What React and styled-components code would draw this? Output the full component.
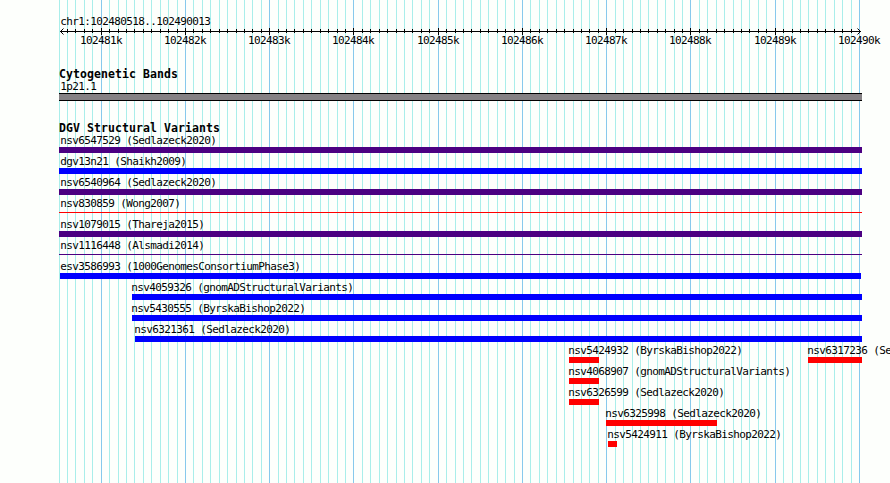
import React from "react";
import styled, { createGlobalStyle } from "styled-components";

const WIDTH = 890;
const HEIGHT = 483;
const TRACK_LEFT = 59;
const KB_START = 102481;

const ticks = [];
for (let n = -5; n <= 90; n++) {
  ticks.push({
    n,
    x: Math.floor(101.2 + n * 8.4255),
    major: n % 10 === 0,
  });
}

const rows = [
  [{ name: "nsv6547529 (Sedlazeck2020)", start: 59, end: 862, color: "#4b0082" }],
  [{ name: "dgv13n21 (Shaikh2009)", start: 59, end: 862, color: "#0000ff" }],
  [{ name: "nsv6540964 (Sedlazeck2020)", start: 59, end: 862, color: "#4b0082" }],
  [{ name: "nsv830859 (Wong2007)", start: 59, end: 862, color: "#ff0000", thin: true }],
  [{ name: "nsv1079015 (Thareja2015)", start: 59, end: 862, color: "#4b0082" }],
  [{ name: "nsv1116448 (Alsmadi2014)", start: 59, end: 862, color: "#4b0082", thin: true }],
  [{ name: "esv3586993 (1000GenomesConsortiumPhase3)", start: 60, end: 861, color: "#0000ff" }],
  [{ name: "nsv4059326 (gnomADStructuralVariants)", start: 132, end: 862, color: "#0000ff" }],
  [{ name: "nsv5430555 (ByrskaBishop2022)", start: 132, end: 862, color: "#0000ff" }],
  [{ name: "nsv6321361 (Sedlazeck2020)", start: 135, end: 862, color: "#0000ff" }],
  [
    { name: "nsv5424932 (ByrskaBishop2022)", start: 569, end: 599, color: "#ff0000" },
    { name: "nsv6317236 (Sedlazeck2020)", start: 808, end: 862, color: "#ff0000" },
  ],
  [{ name: "nsv4068907 (gnomADStructuralVariants)", start: 569, end: 599, color: "#ff0000" }],
  [{ name: "nsv6326599 (Sedlazeck2020)", start: 569, end: 599, color: "#ff0000" }],
  [{ name: "nsv6325998 (Sedlazeck2020)", start: 606, end: 717, color: "#ff0000" }],
  [{ name: "nsv5424911 (ByrskaBishop2022)", start: 608, end: 617, color: "#ff0000" }],
];

function GridLines() {
  return (
    <Backdrop width={WIDTH} height={HEIGHT} shapeRendering="crispEdges">
      {ticks.map((t) => (
        <rect
          key={t.n}
          x={t.x}
          y="0"
          width="1"
          height={HEIGHT}
          fill={t.major ? "#87c9ec" : "#a9eeea"}
        />
      ))}
    </Backdrop>
  );
}

function Ruler() {
  return (
    <Axis width={WIDTH} height="22">
      <g shapeRendering="crispEdges">
        <rect x="60" y="4" width="801" height="1" />
        {ticks.slice(1, -1).map((t) => (
          <rect
            key={t.n}
            x={t.x}
            y={t.major ? 1 : 2}
            width="1"
            height={t.major ? 7 : 4}
          />
        ))}
      </g>
      <path d="M63.5 1.5 L60.5 4.5 L63.5 7.5 M857.5 1.5 L860.5 4.5 L857.5 7.5" />
      {ticks
        .filter((t) => t.major)
        .map((t) => (
          <text key={t.n} x={t.x - 21} y="17">
            {KB_START + t.n / 10}k
          </text>
        ))}
    </Axis>
  );
}

function VariantRow({ features }) {
  return (
    <Row>
      {features.map((f, i) => (
        <Feature
          key={f.name}
          $gap={f.start - (i ? features[i - 1].end : 0)}
          $width={f.end - f.start}
        >
          <Label $shift={Math.max(60, f.start - 1) - f.start + 0.2}>{f.name}</Label>
          <Bar $color={f.color} $thin={f.thin} />
        </Feature>
      ))}
    </Row>
  );
}

export default function App() {
  return (
    <Browser>
      <GlobalStyle />
      <GridLines />
      <Content>
        <Region>chr1:102480518..102490013</Region>
        <Ruler />
        <Track $top={19}>
          <Title>Cytogenetic Bands</Title>
          <BandName>1p21.1</BandName>
          <Band />
        </Track>
        <Track $top={21}>
          <Title>DGV Structural Variants</Title>
          {rows.map((features) => (
            <VariantRow key={features[0].name} features={features} />
          ))}
        </Track>
      </Content>
    </Browser>
  );
}

const GlobalStyle = createGlobalStyle`
  body {
    margin: 0;
    background: #fdfffc;
    overflow: hidden;
  }
`;

const Browser = styled.div`
  position: relative;
  width: ${WIDTH}px;
  height: ${HEIGHT}px;
  overflow: hidden;
  color: #000;
  font-family: "DejaVu Sans Mono", monospace;
  font-size: 11px;
  letter-spacing: -0.622px;
  line-height: 14px;
  white-space: nowrap;
`;

const Backdrop = styled.svg`
  position: absolute;
  top: 0;
  left: 0;
`;

const Content = styled.div`
  position: relative;
  display: flex;
  flex-direction: column;
  padding-top: 15px;
`;

const Region = styled.div`
  height: 12px;
  padding-left: 60.2px;
`;

const Axis = styled.svg`
  display: block;
  overflow: visible;

  path {
    fill: none;
    stroke: #000;
    stroke-width: 1;
  }
`;

const Track = styled.section`
  display: flex;
  flex-direction: column;
  padding-top: ${(p) => p.$top}px;
`;

const Title = styled.h2`
  height: 12px;
  margin: 0;
  padding-left: ${TRACK_LEFT}px;
  font-size: 11.5px;
  font-weight: bold;
  letter-spacing: 0.077px;
  line-height: 12px;
`;

const BandName = styled.div`
  height: 13px;
  padding-left: 60.2px;
`;

const Band = styled.div`
  box-sizing: border-box;
  width: 803px;
  height: 8px;
  margin-left: ${TRACK_LEFT}px;
  background: #858184;
  border: solid #000;
  border-width: 1px 0;
`;

const Row = styled.div`
  display: flex;
  height: 21px;
`;

const Feature = styled.div`
  flex: none;
  width: ${(p) => p.$width}px;
  margin-left: ${(p) => p.$gap}px;
`;

const Label = styled.div`
  height: 13px;
  text-indent: ${(p) => p.$shift}px;
`;

const Bar = styled.div`
  height: ${(p) => (p.$thin ? 1 : 6)}px;
  margin-top: ${(p) => (p.$thin ? 2 : 0)}px;
  background: ${(p) => p.$color};
`;
